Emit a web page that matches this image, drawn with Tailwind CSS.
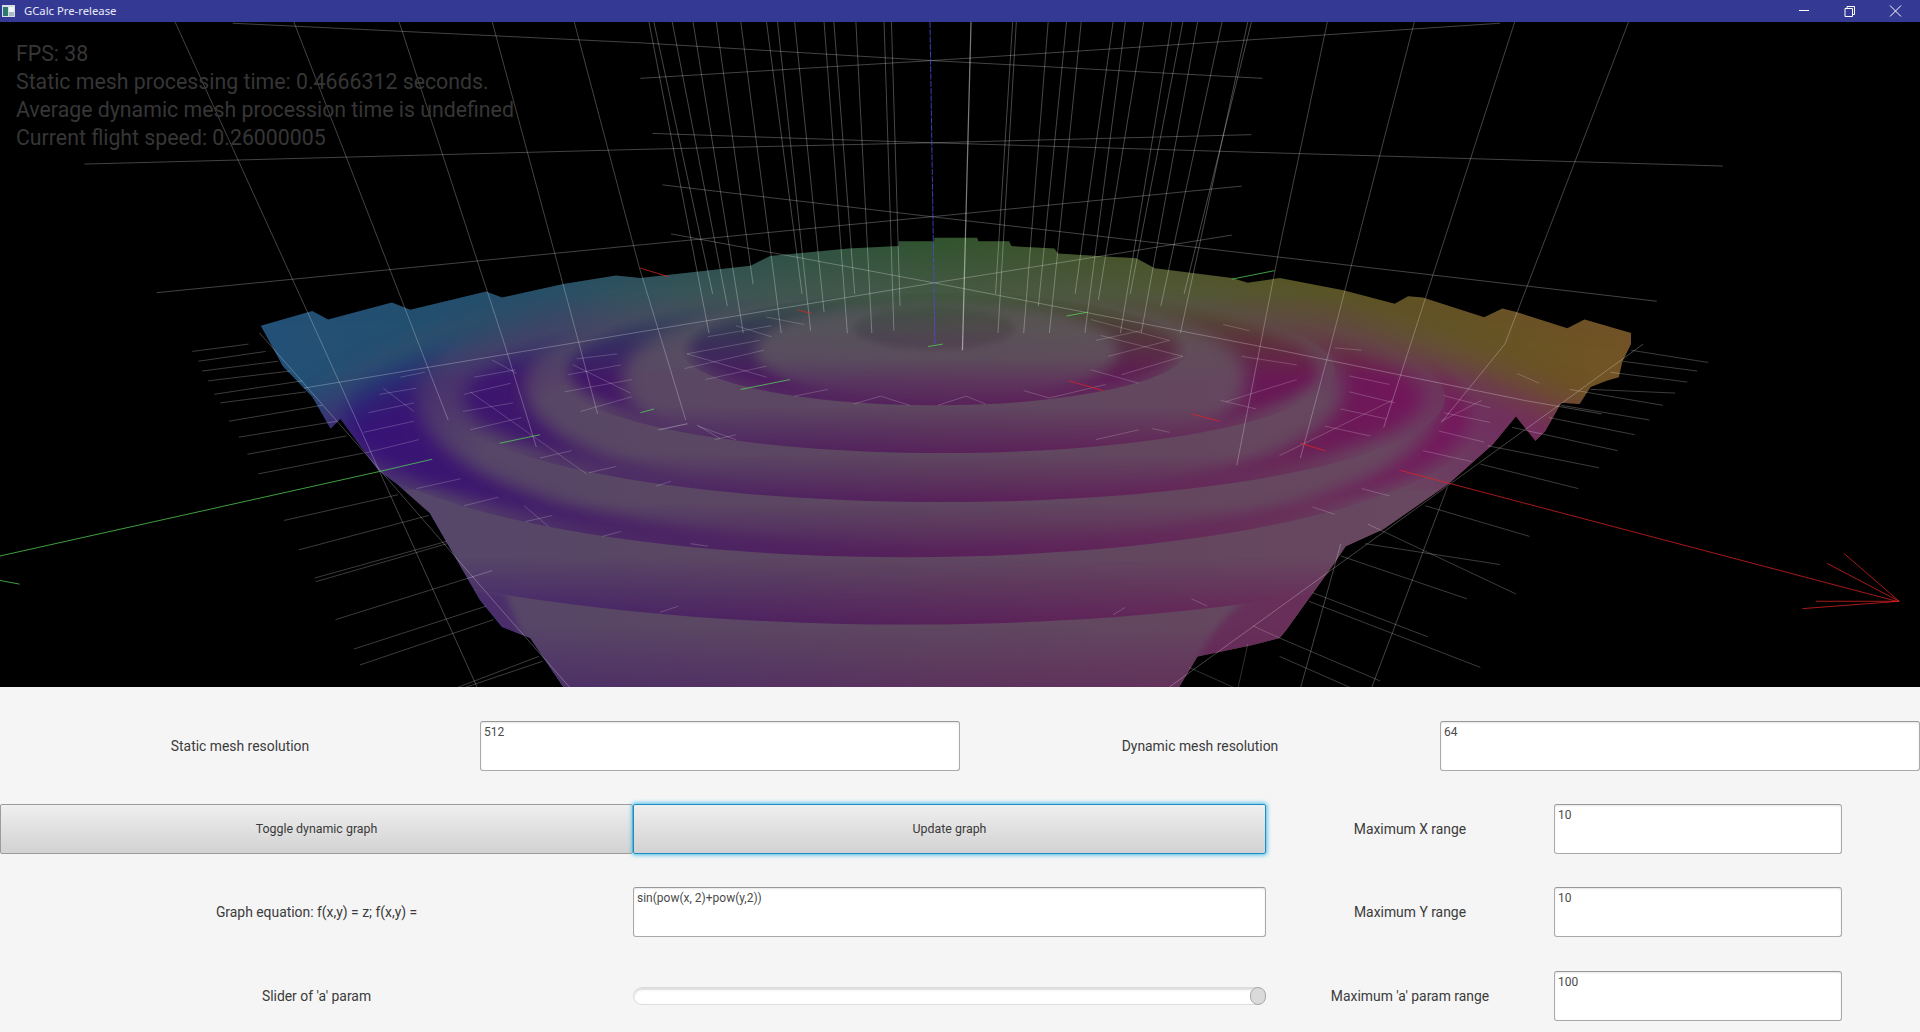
<!DOCTYPE html>
<html lang="en">
<head>
<meta charset="utf-8">
<title>GCalc Pre-release</title>
<script src="https://cdn.jsdelivr.net/npm/@tailwindcss/browser@4"></script>
</head>
<body class="m-0 w-[1920px] h-[1032px] overflow-hidden bg-[#f5f5f5] font-['Roboto',sans-serif]">
<div class="flex flex-col w-[1920px] h-[1032px]">
  <header class="flex items-center justify-between h-[22px] shrink-0 bg-[#343a94]">
    <div class="flex items-center">
      <svg class="ml-[2px] w-[13px] h-[12px]" viewBox="0 0 13 12"><rect width="13" height="12" fill="#d5dfe4"/><rect x="1" y="2" width="5" height="9" fill="#2f7a70"/><rect x="7" y="2" width="5" height="5" fill="#f1f5f6"/><rect x="7" y="7" width="5" height="4" fill="#a9bcc2"/></svg>
      <span class="ml-[9px] text-[11.3px] leading-[22px] text-[#e8e9f5] font-['Noto_Sans',sans-serif]">GCalc Pre-release</span>
    </div>
    <div class="flex items-center pr-[1px]">
      <svg class="w-[45px] h-[22px]" viewBox="0 0 45 22"><path d="M18 10.5H28" stroke="#fff" stroke-width="1"/></svg>
      <svg class="w-[46px] h-[22px]" viewBox="0 0 46 22"><path d="M19 8.5h7.5v8h-7.5zM21 8.5v-2h7.5v8h-2" fill="none" stroke="#fff" stroke-width="1"/></svg>
      <svg class="w-[47px] h-[22px]" viewBox="0 0 47 22"><path d="M18 5.5l11 11M29 5.5l-11 11" stroke="#fff" stroke-width="1"/></svg>
    </div>
  </header>

  <section class="relative h-[665px] shrink-0 bg-black overflow-hidden">
    <svg class="block w-[1920px] h-[665px]" viewBox="0 18 1568 543" preserveAspectRatio="none">
      <defs>
        <clipPath id="sil"><path d="M213 266L255 254L268 261L320 247L335 253L397 238L410 243L460 232L503 225L523 227L613 217L629 209L693 203L734 201L734 197L763 197L763 194L798 194L799 197L824 197L826 201L861 203L864 207L896 209L928 211L943 219L1006 227L1019 231L1045 227L1097 237L1139 248L1150 242L1162 243L1212 259L1227 252L1239 255L1280 268L1294 261L1332 272L1332 281L1325 295L1322 308L1312 311L1299 316L1290 330L1275 329L1262 352L1254 360L1238 340L1219 363L1183 395L1130 432L1099 446L1089 461L1050 515L1045 521L1022 527L978 536L963 561L460 561L433 521L410 512L392 490L351 419L324 395L309 384L278 342L270 350L255 324L231 299Z"/></clipPath>
        <clipPath id="cD"><ellipse cx="740" cy="340" rx="470" ry="115"/></clipPath>
        <clipPath id="cC"><ellipse cx="770" cy="325" rx="410" ry="85"/></clipPath>
        <clipPath id="cB"><ellipse cx="770" cy="302" rx="320" ry="68"/></clipPath>
        <clipPath id="cA"><ellipse cx="763" cy="285" rx="207" ry="46"/></clipPath>
        <linearGradient id="hueTop" gradientUnits="userSpaceOnUse" x1="213" y1="0" x2="1335" y2="0">
          <stop offset="0" stop-color="#1c4f7a"/><stop offset=".21" stop-color="#1d4c68"/><stop offset=".49" stop-color="#2a5228"/><stop offset=".73" stop-color="#52521c"/><stop offset="1" stop-color="#75531f"/>
        </linearGradient>
        <linearGradient id="hueLow" gradientUnits="userSpaceOnUse" x1="280" y1="0" x2="1250" y2="0">
          <stop offset="0" stop-color="#34107a"/><stop offset=".2" stop-color="#3f1268"/><stop offset=".5" stop-color="#551658"/><stop offset=".8" stop-color="#6a1454"/><stop offset="1" stop-color="#7a1460"/>
        </linearGradient>
        <linearGradient id="ramp" gradientUnits="userSpaceOnUse" x1="0" y1="240" x2="0" y2="310">
          <stop offset="0" stop-color="#fff" stop-opacity="0"/><stop offset="1" stop-color="#fff"/>
        </linearGradient>
        <filter id="b3" x="-30%" y="-30%" width="160%" height="160%"><feGaussianBlur stdDeviation="3"/></filter>
        <filter id="b5" x="-30%" y="-30%" width="160%" height="160%"><feGaussianBlur stdDeviation="5"/></filter>
        <filter id="b7" x="-30%" y="-30%" width="160%" height="160%"><feGaussianBlur stdDeviation="7"/></filter>
        <filter id="b16" x="-30%" y="-30%" width="160%" height="160%"><feGaussianBlur stdDeviation="16"/></filter>
        <mask id="rampMask" maskUnits="userSpaceOnUse" x="0" y="18" width="1568" height="543">
          <rect x="0" y="18" width="1568" height="543" fill="url(#ramp)"/>
          <path d="M180 230L480 225L400 275L300 320L250 345L180 345Z" filter="url(#b16)"/>
          <path d="M1360 250L1050 220L1130 275L1230 320L1300 350L1360 350Z" filter="url(#b16)"/>
        </mask>
        <linearGradient id="gF" gradientUnits="userSpaceOnUse" x1="0" y1="510" x2="0" y2="561"><stop offset="0" stop-opacity="0"/><stop offset="1" stop-opacity=".42"/></linearGradient>
        <linearGradient id="gE" gradientUnits="userSpaceOnUse" x1="0" y1="455" x2="0" y2="510"><stop offset="0" stop-opacity="0"/><stop offset="1" stop-opacity=".75"/></linearGradient>
        <linearGradient id="gD" gradientUnits="userSpaceOnUse" x1="0" y1="410" x2="0" y2="455"><stop offset="0" stop-opacity="0"/><stop offset="1" stop-opacity=".75"/></linearGradient>
        <linearGradient id="gC" gradientUnits="userSpaceOnUse" x1="0" y1="370" x2="0" y2="410"><stop offset="0" stop-opacity="0"/><stop offset="1" stop-opacity=".75"/></linearGradient>
        <linearGradient id="gB" gradientUnits="userSpaceOnUse" x1="0" y1="331" x2="0" y2="370"><stop offset="0" stop-opacity="0"/><stop offset="1" stop-opacity=".75"/></linearGradient>
        <linearGradient id="gA" gradientUnits="userSpaceOnUse" x1="0" y1="292" x2="0" y2="331"><stop offset="0" stop-opacity="0"/><stop offset="1" stop-opacity=".7"/></linearGradient>
        <radialGradient id="rim" gradientUnits="userSpaceOnUse" cx="0" cy="0" r="1" gradientTransform="translate(763 400) scale(570 205)"><stop offset=".66" stop-opacity="0"/><stop offset="1" stop-opacity=".85"/></radialGradient>
        <mask id="lit" maskUnits="userSpaceOnUse" x="0" y="18" width="1568" height="543">
          <rect x="0" y="18" width="1568" height="543" fill="#fff"/>
          <rect x="0" y="510" width="1568" height="51" fill="url(#gF)"/>
          <path d="M385 480L412 484L425 515L440 561L395 520ZM1016 490L1000 505L985 525L968 561L1030 540L1100 470L1090 450Z" filter="url(#b3)" opacity=".45"/>

          <ellipse cx="740" cy="360" rx="600" ry="150" fill="#fff"/>
          <ellipse cx="740" cy="360" rx="600" ry="150" fill="url(#gE)"/>

          <ellipse cx="740" cy="340" rx="470" ry="115" fill="#fff"/>
          <g clip-path="url(#cD)">
            <ellipse cx="740" cy="340" rx="460" ry="108" opacity=".9" filter="url(#b7)"/>
            <ellipse cx="760" cy="325" rx="420" ry="125" fill="#fff" filter="url(#b7)"/>
          </g>
          <ellipse cx="740" cy="340" rx="470" ry="115" fill="url(#gD)"/>

          <ellipse cx="770" cy="325" rx="410" ry="85" fill="#fff"/>
          <g clip-path="url(#cC)">
            <ellipse cx="770" cy="325" rx="392" ry="78" opacity=".9" filter="url(#b7)"/>
            <ellipse cx="763" cy="315" rx="335" ry="100" fill="#fff" filter="url(#b7)"/>
          </g>
          <ellipse cx="770" cy="325" rx="410" ry="85" fill="url(#gC)"/>

          <ellipse cx="770" cy="302" rx="320" ry="68" fill="#fff"/>
          <g clip-path="url(#cB)">
            <ellipse cx="770" cy="302" rx="306" ry="62" opacity=".9" filter="url(#b5)"/>
            <ellipse cx="763" cy="310" rx="255" ry="83" fill="#fff" filter="url(#b7)"/>
          </g>
          <ellipse cx="770" cy="302" rx="320" ry="68" fill="url(#gB)"/>

          <ellipse cx="763" cy="285" rx="207" ry="46" fill="#fff"/>
          <g clip-path="url(#cA)">
            <ellipse cx="763" cy="285" rx="200" ry="42" opacity=".9" filter="url(#b5)"/>
            <ellipse cx="765" cy="287" rx="148" ry="44" fill="#fff" filter="url(#b5)"/>
          </g>
          <ellipse cx="763" cy="285" rx="207" ry="46" fill="url(#gA)"/>

          <ellipse cx="763" cy="268" rx="66" ry="17" opacity=".4" filter="url(#b3)"/>
          <rect x="150" y="180" width="1230" height="220" fill="url(#rim)"/>
        </mask>
      </defs>

      <g clip-path="url(#sil)">
        <rect x="150" y="180" width="1240" height="390" fill="url(#hueTop)"/>
        <rect x="150" y="180" width="1240" height="390" fill="url(#hueLow)" mask="url(#rampMask)"/>
        <rect x="150" y="180" width="1240" height="390" fill="#646064" fill-opacity=".68" mask="url(#lit)"/>
      </g>

      <!-- upper wire cross lines -->
      <path fill="none" stroke="#fff" stroke-opacity=".36" stroke-width=".6" d="M190 19L523 35L761 49.5L1045 31L1225 19M523 64L761 49.5L1031 64M533 109L761 116.6L1022 110M69 134L523 122L761 116.6L1045 125L1407 135.6M541 151L761 177L1014 152M128 239L523 200L761 177L1045 210L1353 246M548 191L763 231L1006 192M248 317L457 282L763 231L1045 286L1245 327L1308 338"/>
      <!-- verticals -->
      <path fill="none" stroke="#fff" stroke-opacity=".38" stroke-width=".6" d="M530 18L579 272M534 18L582 240M549 18L594 250M566 18L607 272M585 18L615 232M605 18L638 272M626 18L655 240M635 18L662 270M649 18L673 255M673 18L692 272M681 18L698 240M699 18L712 272M722 18L730 270M728 18L735 250M830 18L815 272M827 18L813 240M856 18L836 272M871 18L848 250M883 18L857 272M909 18L878 240M919 18L886 272M934 18L897 245M957 18L915 272M966 18L923 240M978 18L932 272M998 18L948 250M1019 18L964 272M1022 18L967 240"/>
      <path fill="none" stroke="#fff" stroke-opacity=".48" stroke-width="1" d="M793 18L786 286"/>
      <path fill="none" stroke="#4b4bd6" stroke-opacity=".95" stroke-width=".7" stroke-dasharray="5 1" d="M759.5 18L763.5 282"/>
      <!-- side long lines -->
      <path fill="none" stroke="#fff" stroke-opacity=".36" stroke-width=".6" d="M143 18L263 281L390 562M240 18L342 281L366 343M326 18L412 281L438 365M402 18L473 281L488 338M469 18L522 218L560 343M1330 18L1229 281L1177 345M1237 18L1152 281L1130 349M1155 18L1087 281L1062 374M1084 18L1045 202L1010 380M1182 398L1120 562M1095 444L1062 562M212 272L313 387L413 502L465 561M1342 281L1045 496L955 561"/>
      <!-- ladders -->
      <path fill="none" stroke="#fff" stroke-opacity=".32" stroke-width=".6" d="M1332 286L1395 296M1325 295L1386 303M1315 304L1378 312M1299 318L1368 321M1282 318L1358 331M1275 331L1347 343M1265 341L1335 355M1235 349L1321 368M1215 364L1306 382M1209 379L1289 399M1164 413L1249 438M1115 444L1225 461M1095 454L1198 489M1117 428L1238 485M1072 484L1166 520M1069 491L1209 545M1045 521L1127 556M1045 536L1104 562M157 287L203 281M162 295L217 287M165 303L227 295M170 311L237 303M175 322L247 311M180 329L250 320M187 344L263 331M195 357L275 344M202 371L283 356M211 387L297 370M232 425L325 404M244 449L350 421M257 472L365 442M258 475L365 444M274 506L402 466M289 530L397 495M294 543L403 506M372 562L440 536M378 562L443 540"/>
      <!-- floor bits in the gaps -->
      <path fill="none" stroke="#fff" stroke-opacity=".26" stroke-width=".6" d="M301 337L338 329M297 353L338 344M298 370L342 359M310 322L340 317M327 308L347 304M379 322L417 313M378 336L419 329M384 351L426 341M387 308L421 302M384 320L479 387M313 317L338 336M402 294L422 305M461 320L516 310M464 306L507 298M471 293L504 289M474 336L516 324M468 298L515 321M441 374L467 368M481 386L503 381M537 351L562 346M569 347L588 358M340 399L376 391M379 413L407 406M428 413L448 430M429 426L451 421M492 438L507 434M578 275L630 266M561 289L620 278M559 301L624 286M576 310L626 299M601 266L630 275M561 289L626 308M626 259L657 265M905 291L955 278M895 278L932 270M916 306L966 291M891 261L955 278M899 274L966 291M891 302L930 313M836 319L857 325L903 314M697 330L719 323.5L743 331M766 331L789 323.5L805 330M649 323.5L676 318M539 351L561 346M570 348L601 359M584 359L601 355M895 359L930 351M941 350L955 353M997 327L1026 334M1014 291L1059 298M999 265L1020 270M1001 328L1059 310M1102 320L1139 329M1095 334L1132 342M1102 307L1135 314M1082 348L1119 356M1045 372L1137 327M1090 284L1112 286M1179 323L1217 333M1179 337L1217 345M1175 352L1212 361M1162 368L1202 377M1177 344L1210 327M1239 305L1257 313M1112 399L1135 405M1072 414L1090 420M536 397L548 393M564 444L578 446M539 500L554 495M909 502L919 496M973 489L986 495M1023 511L1045 521M1019 526L1011 562M971 545L1009 562"/>
      <!-- axes -->
      <path fill="none" stroke="#57d957" stroke-opacity=".85" stroke-width=".7" d="M0 454L310 385M310 385L353 375M408 362L441 355M605 318L645 310M523 337L534 334M1006 228L1041 221M871 258L888 255M0 474L16 477M758 283L770 281"/>
      <path fill="none" stroke="#e62222" stroke-opacity=".85" stroke-width=".7" d="M1143 384L1549 491M1506 452L1551 491M1492 460L1551 491M1483 491L1551 491M1472 497L1551 491M1062 362L1082 368M873 311L901 319M973 338L996 344M523 219L546 226M651 253L663 256"/>
    </svg>
    <div class="absolute left-[16px] top-[18px] text-[21.3px] leading-[28px] font-normal text-[#363636]">
      <p>FPS: 38</p>
      <p>Static mesh processing time: 0.4666312 seconds.</p>
      <p>Average dynamic mesh procession time is undefined</p>
      <p>Current flight speed: 0.26000005</p>
    </div>
  </section>

  <main class="flex-1 flex flex-col gap-[33px] pt-[34px] bg-[#f5f5f5] text-[13.9px] text-[#3b3b3b]">
    <div class="grid grid-cols-4 h-[50px] items-center text-center">
      <span>Static mesh resolution</span>
      <div class="h-[50px] bg-white border border-[#a9a9a9] border-t-[#999] rounded-[3px] px-[3px] pt-[1px] text-left text-[12px] leading-[18px] text-[#4a4a4a] shadow-[inset_0_1px_2px_#0000001a]">512</div>
      <span>Dynamic mesh resolution</span>
      <div class="h-[50px] bg-white border border-[#a9a9a9] border-t-[#999] rounded-[3px] px-[3px] pt-[1px] text-left text-[12px] leading-[18px] text-[#4a4a4a] shadow-[inset_0_1px_2px_#0000001a]">64</div>
    </div>

    <div class="grid grid-cols-[633px_633px_288px_288px] h-[50px] items-center text-center">
      <button class="h-[50px] text-[12.4px] text-[#3b3b3b] bg-gradient-to-b from-[#efefef] to-[#d2d2d2] border border-[#9c9c9c] rounded-[2px]">Toggle dynamic graph</button>
      <button class="h-[50px] text-[12.4px] text-[#3b3b3b] bg-gradient-to-b from-[#efefef] to-[#d2d2d2] border border-[#1b8fc4] rounded-[2px] shadow-[0_0_4px_1px_#45bce8]">Update graph</button>
      <span>Maximum X range</span>
      <div class="h-[50px] bg-white border border-[#a9a9a9] border-t-[#999] rounded-[3px] px-[3px] pt-[1px] text-left text-[12px] leading-[18px] text-[#4a4a4a] shadow-[inset_0_1px_2px_#0000001a]">10</div>
    </div>

    <div class="grid grid-cols-[633px_633px_288px_288px] h-[50px] items-center text-center">
      <span>Graph equation: f(x,y) = z; f(x,y) =</span>
      <div class="h-[50px] bg-white border border-[#a9a9a9] border-t-[#999] rounded-[3px] px-[3px] pt-[1px] text-left text-[12px] leading-[18px] text-[#4a4a4a] shadow-[inset_0_1px_2px_#0000001a]">sin(pow(x, 2)+pow(y,2))</div>
      <span>Maximum Y range</span>
      <div class="h-[50px] bg-white border border-[#a9a9a9] border-t-[#999] rounded-[3px] px-[3px] pt-[1px] text-left text-[12px] leading-[18px] text-[#4a4a4a] shadow-[inset_0_1px_2px_#0000001a]">10</div>
    </div>

    <div class="grid grid-cols-[633px_633px_288px_288px] h-[50px] mt-[1px] items-center text-center">
      <span>Slider of 'a' param</span>
      <div class="relative h-[18px] bg-white border border-[#dcdcdc] rounded-full shadow-[inset_0_2px_2px_#00000024]">
        <div class="absolute right-[-1px] top-[-1px] w-[16px] h-[18px] rounded-full bg-[#dadada] border border-[#a8a8a8]"></div>
      </div>
      <span>Maximum 'a' param range</span>
      <div class="h-[50px] bg-white border border-[#a9a9a9] border-t-[#999] rounded-[3px] px-[3px] pt-[1px] text-left text-[12px] leading-[18px] text-[#4a4a4a] shadow-[inset_0_1px_2px_#0000001a]">100</div>
    </div>
  </main>
</div>
</body>
</html>
